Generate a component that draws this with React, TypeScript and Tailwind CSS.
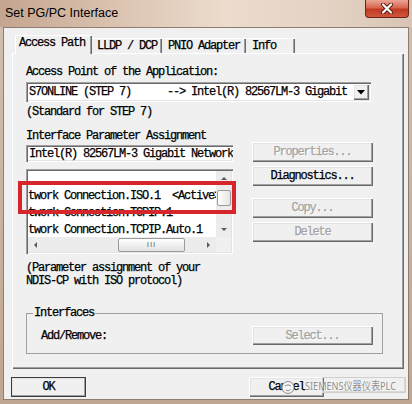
import type { ReactNode } from "react";

const mono =
  "font-['Liberation_Mono','Courier_New',monospace] text-[12px] tracking-[-1.2px] leading-[12px] [-webkit-text-stroke:0.25px_currentColor]";
const raised =
  "bg-[#f0f0f0] shadow-[inset_1px_1px_#ffffff,inset_-1px_-1px_#696969,inset_-2px_-2px_#a0a0a0,inset_2px_2px_#e3e3e3]";
const sunken =
  "bg-white shadow-[inset_1px_1px_#a0a0a0,inset_2px_2px_#696969,inset_-1px_-1px_#ffffff,inset_-2px_-2px_#e3e3e3]";

function Btn({ children, disabled, className }: { children: ReactNode; disabled?: boolean; className?: string }) {
  return (
    <div
      className={`flex items-center justify-center ${raised} ${
        disabled ? "text-[#a3a3a3] [text-shadow:1px_1px_#ffffff]" : "text-black"
      } ${className ?? ""}`}
    >
      {children}
    </div>
  );
}

function Arrow({ dir }: { dir: "up" | "down" | "left" | "right" }) {
  const pts = {
    up: "1,5 4,2 7,5",
    down: "1,2 4,5 7,2",
    left: "5,1 2,4 5,7",
    right: "2,1 5,4 2,7",
  }[dir];
  return (
    <svg width="8" height="8" viewBox="0 0 8 8">
      <polygon points={pts} fill="#5a5a5a" />
    </svg>
  );
}

function ListBox() {
  const rows = ["", "twork Connection.ISO.1  <Active>", "twork Connection.TCPIP.1", "twork Connection.TCPIP.Auto.1"];
  return (
    <div className={`mt-[7px] h-[85px] p-[2px] ${sunken}`}>
      <div className="grid grid-cols-[188px_15px] grid-rows-[66px_15px]">
        <div className="overflow-hidden bg-white">
          {rows.map((r, i) => (
            <div key={i} className="h-[17px] leading-[17px] whitespace-pre overflow-hidden">
              {r}
            </div>
          ))}
        </div>
        <div className="flex flex-col items-center bg-[#ececec]">
          <div className="h-[15px] flex items-center justify-center">
            <Arrow dir="up" />
          </div>
          <div className="mt-[4px] w-[14px] h-[16px] rounded-[2px] border border-[#9a9a9a] bg-[linear-gradient(90deg,#ffffff,#e4e4e4)]" />
          <div className="flex-1" />
          <div className="h-[15px] flex items-center justify-center">
            <Arrow dir="down" />
          </div>
        </div>
        <div className="flex items-center bg-[#ececec]">
          <div className="w-[15px] h-[15px] flex items-center justify-center">
            <Arrow dir="left" />
          </div>
          <div className="ml-[75px] w-[67px] h-[14px] rounded-[2px] border border-[#9a9a9a] bg-[linear-gradient(180deg,#ffffff,#e2e2e2)] flex items-center justify-center">
            <span className="text-[8px] leading-[8px] tracking-[1px] text-[#6a6a6a] [-webkit-text-stroke:0] font-['Liberation_Sans',sans-serif]">
              III
            </span>
          </div>
          <div className="flex-1" />
          <div className="w-[15px] h-[15px] flex items-center justify-center">
            <Arrow dir="right" />
          </div>
        </div>
        <div className="bg-[#f0f0f0]" />
      </div>
    </div>
  );
}

export default function App() {
  return (
    <div className={`relative w-[412px] h-[404px] overflow-hidden flex flex-col bg-[linear-gradient(180deg,#d3bfae,#bfa692)] ${mono}`}>
      {/* title bar */}
      <div className="h-[27px] shrink-0 flex items-start justify-between bg-[linear-gradient(90deg,#c4a58f_0%,#dcc5b2_30%,#ecdccd_55%,#e4d3c4_80%,#d7c4b5_100%)]">
        <span className="pl-[5px] pt-[6px] text-[12.5px] leading-[15px] tracking-normal [-webkit-text-stroke:0] text-black font-['Liberation_Sans',Arial,sans-serif]">
          Set PG/PC Interface
        </span>
        <div className="mr-[3px] w-[44px] h-[18px] rounded-b-[4px] border border-t-0 border-[#6e2216] bg-[linear-gradient(180deg,#eaa595_0%,#d86650_45%,#c03a24_55%,#d0563c_100%)] flex items-center justify-center">
          <svg width="14" height="11" viewBox="0 0 14 11">
            <path d="M3 1.5 L11 9.5 M11 1.5 L3 9.5" stroke="#5a1a10" strokeWidth="4" strokeLinecap="round" />
            <path d="M3 1.5 L11 9.5 M11 1.5 L3 9.5" stroke="#ffffff" strokeWidth="2.2" strokeLinecap="round" />
          </svg>
        </div>
      </div>

      {/* client area */}
      <div className="flex-1 mx-[3px] mb-[4px] border border-[#8e7d70] bg-[#f0f0f0] flex flex-col text-black">
        {/* tabs */}
        <div className="mt-[7px] h-[18px] flex items-end pl-[11px]">
          <div className="relative z-10 -mb-px w-[77px] h-[19px] pl-[4px] pt-[2px] bg-[#f0f0f0] shadow-[inset_1px_1px_#ffffff,inset_-1px_0_#696969,inset_-2px_0_#a0a0a0]">
            Access Path
          </div>
          <div className="w-[70px] h-[15px] pl-[5px] flex items-center shadow-[inset_0_1px_#ffffff,inset_-1px_0_#696969,inset_-2px_0_#a0a0a0]">
            LLDP / DCP
          </div>
          <div className="w-[84px] h-[15px] pl-[6px] flex items-center shadow-[inset_0_1px_#ffffff,inset_-1px_0_#696969,inset_-2px_0_#a0a0a0]">
            PNIO Adapter
          </div>
          <div className="w-[49px] h-[15px] pl-[6px] flex items-center shadow-[inset_0_1px_#ffffff,inset_-1px_0_#696969,inset_-2px_0_#a0a0a0]">
            Info
          </div>
        </div>

        {/* tab panel */}
        <div className="ml-[8px] w-[392px] h-[316px] pl-[14px] pt-[13px] flex flex-col shadow-[inset_1px_1px_#ffffff,inset_-1px_-1px_#696969,inset_-2px_-2px_#a0a0a0]">
          <div>Access Point of the Application:</div>
          <div className={`mt-[4px] w-[345px] h-[20px] flex items-center pl-[3px] pr-[2px] ${sunken}`}>
            <span className="flex-1 whitespace-pre">S7ONLINE (STEP 7)      --&gt; Intel(R) 82567LM-3 Gigabit</span>
            <div className={`w-[16px] h-[16px] flex items-center justify-center ${raised}`}>
              <svg width="8" height="5" viewBox="0 0 8 5">
                <polygon points="0,0 8,0 4,4.5" fill="#000000" />
              </svg>
            </div>
          </div>
          <div className="mt-[4px]">(Standard for STEP 7)</div>
          <div className="mt-[12px]">Interface Parameter Assignment</div>

          <div className="flex gap-[19px]">
            <div className="w-[207px] flex flex-col">
              <div className={`mt-[3px] h-[17px] flex items-center pl-[3px] whitespace-pre overflow-hidden ${sunken}`}>
                Intel(R) 82567LM-3 Gigabit Network
              </div>
              <ListBox />
            </div>
            <div className="w-[121px] flex flex-col">
              <Btn disabled className="h-[20px]">Properties...</Btn>
              <Btn className="mt-[4px] h-[20px]">Diagnostics...</Btn>
              <Btn disabled className="mt-[12px] h-[20px]">Copy...</Btn>
              <Btn disabled className="mt-[4px] h-[20px]">Delete</Btn>
            </div>
          </div>

          <div className="mt-[8px] leading-[13px]">
            <div>(Parameter assignment of your</div>
            <div>NDIS-CP with ISO protocol)</div>
          </div>

          <fieldset className="mt-[19px] w-[357px] border border-[#a0a0a0] pb-[8px]">
            <legend className="ml-[6px] px-[1px] leading-[12px]">Interfaces</legend>
            <div className="pt-[7px] pl-[14px] pr-[9px] flex items-center justify-between">
              <span>Add/Remove:</span>
              <Btn disabled className="w-[121px] h-[19px]">Select...</Btn>
            </div>
          </fieldset>
        </div>

        {/* bottom buttons */}
        <div className="mt-[8px] flex pl-[7px]">
          <Btn className="w-[75px] h-[20px] outline outline-1 outline-[#3c3c3c] -outline-offset-1">OK</Btn>
          <Btn className="ml-[163px] w-[75px] h-[20px]">Cancel</Btn>
        </div>
      </div>

      {/* red annotation box */}
      <div className="absolute left-[18px] top-[181px] w-[218px] h-[33px] border-[4px] border-[#d6262b]" />

      {/* watermark */}
      <div className="absolute left-[322px] top-[377px] w-[84px] h-[16px] border border-[#cfcfcf] shadow-[inset_-1px_-1px_#d8d8d8]" />
      <svg className="absolute left-[281px] top-[380px]" width="14" height="15" viewBox="0 0 14 15">
        <circle cx="7" cy="7.5" r="6" fill="#f6f6f6" stroke="#8a8a8a" strokeWidth="1" />
        <path d="M4 6 Q7 3.5 10 6 M5 10 Q7 12 9.5 9.5" stroke="#8a8a8a" strokeWidth="1" fill="none" />
      </svg>
      <div className="absolute left-[305px] top-[379px] origin-left scale-x-[0.83] whitespace-nowrap text-[11px] leading-[14px] tracking-normal [-webkit-text-stroke:0] text-[#8e8e8e] [text-shadow:0_0_2px_#ffffff] font-['Noto_Sans','Noto_Sans_CJK_SC',sans-serif]">
        SIEMENS仪器仪表PLC
      </div>
    </div>
  );
}
